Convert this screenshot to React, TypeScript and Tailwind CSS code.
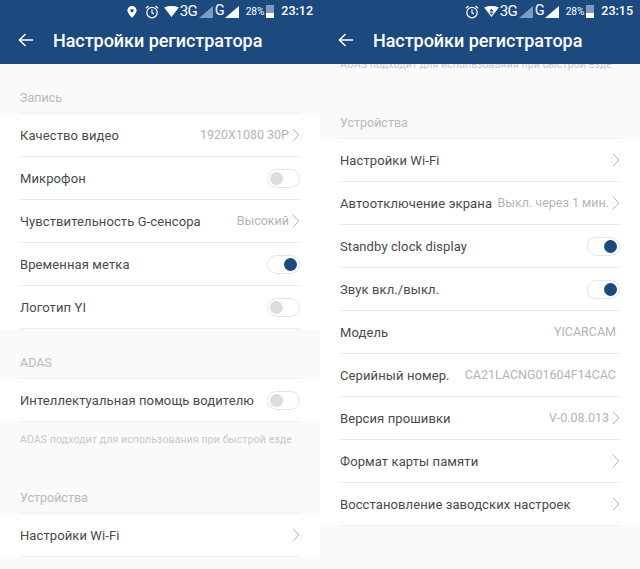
import React from 'react';

const Chevron = () => (
  <svg width="8" height="14" viewBox="0 0 8 14" className="ml-[3px] shrink-0" fill="none">
    <path d="M1 1l6 6-6 6" stroke="#b4b4b4" strokeWidth="1" />
  </svg>
);

const Toggle = ({ on }: { on?: boolean }) => (
  <div className={`w-[33px] h-[19px] rounded-full border border-[#e4e4e4] bg-white flex items-center px-[2px] ${on ? 'justify-end' : 'justify-start'}`}>
    <div className={`w-[13px] h-[13px] rounded-full ${on ? 'bg-[#1c4a7e]' : 'bg-[#dcdcdc]'}`} />
  </div>
);

const Signal = ({ dim }: { dim?: boolean }) => (
  <svg width="14" height="12" viewBox="0 0 14 12">
    <path d="M14 0v12H0z" fill={dim ? '#7f9bbb' : '#ffffff'} />
  </svg>
);

const StatusBar = ({ time, pin, wifiData }: { time: string; pin?: boolean; wifiData?: boolean }) => (
  <div className="h-[23px] flex items-center justify-end pr-[7px] text-white">
    {pin && (
      <svg width="10" height="12" viewBox="0 0 10 13" className="mr-[8px]">
        <path fillRule="evenodd" d="M5 0a5 5 0 0 1 5 5c0 3-5 8-5 8S0 8 0 5a5 5 0 0 1 5-5zm0 3.2a1.8 1.8 0 1 0 0 3.6 1.8 1.8 0 0 0 0-3.6z" fill="#fff" />
      </svg>
    )}
    <svg width="14" height="14" viewBox="0 0 14 14" className="mr-[5px]" fill="none" stroke="#fff">
      <circle cx="7" cy="7.6" r="5.2" strokeWidth="1.2" />
      <path d="M7 4.5v3.3l2 1.2M1 3.2L3.4 1M13 3.2L10.6 1" strokeWidth="1.2" />
    </svg>
    <svg width="15" height="11" viewBox="0 0 16 12">
      <path d="M0 1.5Q8-1.5 16 1.5L8 12z" fill="#fff" />
      {wifiData && <path d="M8 3l2.4 3H5.600zM5.800 7h4.400L8 9.800z" fill="#1c4a7e" />}
    </svg>
    <span className="text-[15px] leading-none ml-[1px] tracking-[-0.8px]">3G</span>
    <div className="ml-[2px] flex"><Signal dim /></div>
    <span className="text-[14.500px] leading-none ml-[2px]">G</span>
    <Signal />
    <span className="text-[10px] leading-none ml-[7px]">28%</span>
    <div className="w-[8px] h-[13px] ml-[2px] bg-[#7f9bbb] flex flex-col justify-end">
      <div className="h-[5px] bg-white" />
    </div>
    <span className="text-[12.500px] leading-none ml-[7px] font-medium">{time}</span>
  </div>
);

const Header = (props: { time: string; pin?: boolean; wifiData?: boolean }) => (
  <div className="relative z-10 h-[64px] shrink-0 bg-[#1c4a7e]">
    <StatusBar {...props} />
    <div className="h-[34px] flex items-center pl-[18px] text-white">
      <svg width="15" height="14" viewBox="0 0 15 14" fill="none" stroke="#fff" strokeWidth="1.500">
        <path d="M15 7H1.500M7.500 1l-6 6 6 6" />
      </svg>
      <span className="ml-[20px] text-[18px] font-medium tracking-[-0.05px]">Настройки регистратора</span>
    </div>
  </div>
);

const Row = ({ label, value, chevron, toggle, on }: { label: string; value?: string; chevron?: boolean; toggle?: boolean; on?: boolean }) => (
  <div className="h-[43px] bg-white flex">
    <div className="mx-[20px] flex-1 flex items-center justify-between border-b border-[#ececec]">
      <span className="mt-[1px] text-[13px] text-[#4a4a4a] tracking-[0.1px] whitespace-nowrap">{label}</span>
      <div className="flex items-center">
        {value && <span className={`mt-[1px] text-[12.500px] text-[#b4b4b4] whitespace-nowrap ${chevron ? '' : 'mr-[4px]'}`}>{value}</span>}
        {chevron && <Chevron />}
        {toggle && <Toggle on={on} />}
      </div>
    </div>
  </div>
);

const SectionLabel = ({ children, className }: { children: React.ReactNode; className: string }) => (
  <div className={`px-[20px] text-[12.500px] leading-[16px] text-[#b9b9b9] ${className}`}>{children}</div>
);

// hairline above the first row of a group
const GroupTop = () => (
  <div className="h-[1px] px-[20px]">
    <div className="h-full bg-[#f1f1f1]" />
  </div>
);

const Note = ({ className }: { className: string }) => (
  <div className={`px-[20px] text-[10.500px] leading-[14px] text-[#c8c8c8] tracking-[0.12px] whitespace-nowrap ${className}`}>
    ADAS подходит для использования при быстрой езде
  </div>
);

const App = () => (
  <div className="w-[640px] h-[569px] flex font-['Roboto',sans-serif] overflow-hidden">
    <div className="w-[320px] h-[569px] flex flex-col bg-[#fafafa] overflow-hidden">
      <Header time="23:12" pin />
      <SectionLabel className="pt-[26px] pb-[7px]">Запись</SectionLabel>
      <GroupTop />
      <Row label="Качество видео" value="1920X1080 30P" chevron />
      <Row label="Микрофон" toggle />
      <Row label="Чувствительность G-сенсора" value="Высокий" chevron />
      <Row label="Временная метка" toggle on />
      <Row label="Логотип YI" toggle />
      <SectionLabel className="pt-[26px] pb-[7px]">ADAS</SectionLabel>
      <GroupTop />
      <Row label="Интеллектуальная помощь водителю" toggle />
      <Note className="pt-[11px]" />
      <SectionLabel className="pt-[43px] pb-[7px]">Устройства</SectionLabel>
      <GroupTop />
      <Row label="Настройки Wi-Fi" chevron />
    </div>
    <div className="w-[320px] h-[569px] flex flex-col bg-[#fafafa] overflow-hidden">
      <Header time="23:15" wifiData />
      <Note className="-mt-[6px]" />
      <SectionLabel className="pt-[43px] pb-[7px]">Устройства</SectionLabel>
      <GroupTop />
      <Row label="Настройки Wi-Fi" chevron />
      <Row label="Автоотключение экрана" value="Выкл. через 1 мин." chevron />
      <Row label="Standby clock display" toggle on />
      <Row label="Звук вкл./выкл." toggle on />
      <Row label="Модель" value="YICARCAM" />
      <Row label="Серийный номер." value="CA21LACNG01604F14CAC" />
      <Row label="Версия прошивки" value="V-0.08.013" chevron />
      <Row label="Формат карты памяти" chevron />
      <Row label="Восстановление заводских настроек" chevron />
    </div>
  </div>
);

export default App;
